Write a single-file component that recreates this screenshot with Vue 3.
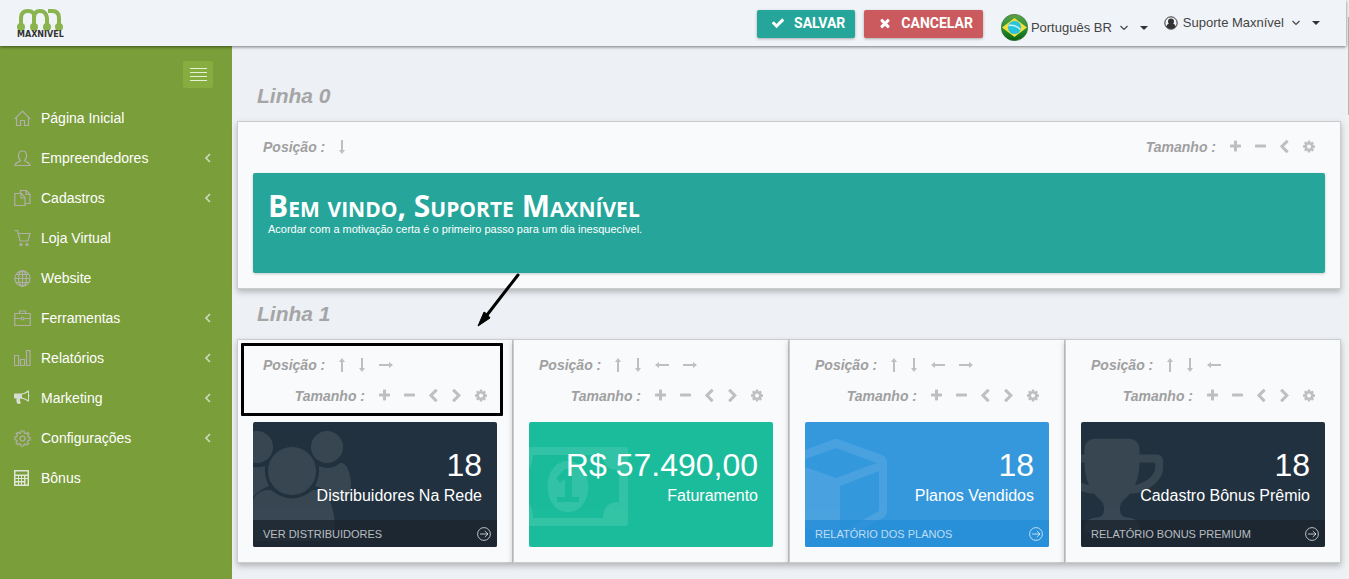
<script setup>
const menu = [
  { label: 'Página Inicial', icon: 'home' },
  { label: 'Empreendedores', icon: 'user', sub: true },
  { label: 'Cadastros', icon: 'docs', sub: true },
  { label: 'Loja Virtual', icon: 'cart' },
  { label: 'Website', icon: 'globe' },
  { label: 'Ferramentas', icon: 'case', sub: true },
  { label: 'Relatórios', icon: 'chart', sub: true },
  { label: 'Marketing', icon: 'horn', sub: true },
  { label: 'Configurações', icon: 'gear', sub: true },
  { label: 'Bônus', icon: 'calc' }
]

const arrows = {
  up: { w: 6, name: 'Mover para cima', d: 'M3 0L6 4H4V14H2V4H0Z' },
  down: { w: 6, name: 'Mover para baixo', d: 'M3 14L0 10H2V0H4V10H6Z' },
  left: { w: 14, name: 'Mover para a esquerda', d: 'M0 7L4 4V6H14V8H4V10Z' },
  right: { w: 14, name: 'Mover para a direita', d: 'M14 7L10 10V8H0V6H10V4Z' }
}

const tools = {
  plus: { w: 11, box: '192 128 1408 1536', name: 'Aumentar', d: 'M1600 736v192q0 40-28 68t-68 28h-416v416q0 40-28 68t-68 28h-192q-40 0-68-28t-28-68v-416h-416q-40 0-68-28t-28-68v-192q0-40 28-68t68-28h416v-416q0-40 28-68t68-28h192q40 0 68 28t28 68v416h416q40 0 68 28t28 68z' },
  minus: { w: 11, box: '192 128 1408 1536', name: 'Diminuir', d: 'M1600 736v192q0 40-28 68t-68 28h-1216q-40 0-68-28t-28-68v-192q0-40 28-68t68-28h1216q40 0 68 28t28 68z' },
  prev: { w: 9, box: '410 50 1100 1570', name: 'Recuar', d: 'M1427 301l-531 531 531 531q19 19 19 45t-19 45l-166 166q-19 19-45 19t-45-19l-742-742q-19-19-19-45t19-45l742-742q19-19 45-19t45 19l166 166q19 19 19 45t-19 45z' },
  next: { w: 9, box: '310 50 1100 1570', name: 'Avançar', d: 'M1363 877l-742 742q-19 19-45 19t-45-19l-166-166q-19-19-19-45t19-45l531-531-531-531q-19-19-19-45t19-45l166-166q19-19 45-19t45 19l742 742q19 19 19 45t-19 45z' },
  cog: { w: 12, box: '128 128 1536 1536', name: 'Configurar', d: 'M1152 896q0-106-75-181t-181-75-181 75-75 181 75 181 181 75 181-75 75-181zm512-109v222q0 12-8 23t-20 13l-185 28q-19 54-39 91 35 50 107 138 10 12 10 25t-9 23q-27 37-99 108t-94 71q-12 0-26-9l-138-108q-44 23-91 38-16 136-29 186-7 28-36 28h-222q-14 0-24.5-8.5t-11.5-21.5l-28-184q-49-16-90-37l-141 107q-10 9-25 9-14 0-25-11-126-114-165-168-7-10-7-23 0-12 8-23 15-21 51-66.5t54-70.5q-27-50-41-99l-183-27q-13-2-21-12.5t-8-23.5v-222q0-12 8-23t19-13l186-28q14-46 39-92-40-57-107-138-10-12-10-24 0-10 9-23 26-36 98.5-107.5t94.5-71.5q13 0 26 10l138 107q44-23 91-38 16-136 29-186 7-28 36-28h222q14 0 24.5 8.5t11.5 21.5l28 184q49 16 90 37l142-107q9-9 24-9 13 0 25 10 129 119 165 170 7 8 7 22 0 12-8 23-15 21-51 66.5t-54 70.5q26 50 41 98l183 28q13 2 21 12.5t8 23.5z' }
}

const rows = [
  { title: 'Linha 0', panels: [{ kind: 'banner', move: ['down'], size: ['plus', 'minus', 'prev', 'cog'] }] },
  {
    title: 'Linha 1',
    panels: [
      { kind: 'stat', art: 'users', tone: 'navy', value: '18', desc: 'Distribuidores Na Rede', more: 'Ver Distribuidores', move: ['up', 'down', 'right'], size: ['plus', 'minus', 'prev', 'next', 'cog'], marked: true },
      { kind: 'stat', art: 'money', tone: 'mint', value: 'R$ 57.490,00', desc: 'Faturamento', move: ['up', 'down', 'left', 'right'], size: ['plus', 'minus', 'prev', 'next', 'cog'] },
      { kind: 'stat', art: 'cube', tone: 'blue', value: '18', desc: 'Planos Vendidos', more: 'Relatório dos Planos', move: ['up', 'down', 'left', 'right'], size: ['plus', 'minus', 'prev', 'next', 'cog'] },
      { kind: 'stat', art: 'trophy', tone: 'navy', value: '18', desc: 'Cadastro Bônus Prêmio', more: 'Relatório Bonus Premium', move: ['up', 'down', 'left'], size: ['plus', 'minus', 'prev', 'next', 'cog'] }
    ]
  }
]
</script>

<template>
  <div class="frame">
    <div class="page">
      <header class="topbar">
        <a href="#" class="logo">
          <svg width="46" height="22" viewBox="0 0 46 22" aria-hidden="true">
            <g fill="none" stroke="#8ab44d" stroke-width="4">
              <path d="M4 18V9Q4 2 11 2T17 9V18M17 9Q17 2 23 2T30 9V18M31 2H35Q42 2 42 9V18" />
            </g>
            <g fill="#8ab44d"><circle cx="4" cy="18" r="4" /><circle cx="17" cy="18" r="4" /><circle cx="30" cy="18" r="4" /><circle cx="42" cy="18" r="4" /></g>
          </svg>
          <span>MAXNIVEL</span>
        </a>
        <div class="actions">
          <button class="btn save" type="button">
            <svg width="14" height="14" viewBox="0 0 1792 1792" fill="currentColor"><path d="M1671 566q0 40-28 68l-724 724-136 136q-28 28-68 28t-68-28l-136-136-362-362q-28-28-28-68t28-68l136-136q28-28 68-28t68 28l294 295 656-657q28-28 68-28t68 28l136 136q28 28 28 68z" /></svg>
            Salvar
          </button>
          <button class="btn cancel" type="button">
            <svg width="14" height="14" viewBox="0 0 1792 1792" fill="currentColor"><path d="M1490 1322q0 40-28 68l-136 136q-28 28-68 28t-68-28l-294-294-294 294q-28 28-68 28t-68-28l-136-136q-28-28-28-68t28-68l294-294-294-294q-28-28-28-68t28-68l136-136q28-28 68-28t68 28l294 294 294-294q28-28 68-28t68 28l136 136q28 28 28 68t-28 68l-294 294 294 294q28 28 28 68z" /></svg>
            Cancelar
          </button>
        </div>
        <button class="drop lang" type="button">
          <svg class="flag" width="27" height="27" viewBox="0 0 27 27">
            <defs>
              <linearGradient id="leaf" x1="0" y1="0" x2="0" y2="1"><stop offset="0" stop-color="#5f9f45" /><stop offset=".5" stop-color="#28943a" /><stop offset="1" stop-color="#08620d" /></linearGradient>
            </defs>
            <circle cx="13.5" cy="13.5" r="13.2" fill="url(#leaf)" stroke="#2c6330" stroke-width=".6" />
            <path d="M1 13.5L13.5 4 26 13.5 13.5 23Z" fill="#f4df38" />
            <circle cx="13.5" cy="13.5" r="6.6" fill="#28c4df" />
            <path d="M7.5 11.5Q14 10 19.500 15.500" fill="none" stroke="#c8f4f5" stroke-width="1.500" />
          </svg>
          <span>Português BR</span>
          <svg class="angle" width="8" height="6" viewBox="0 0 8 6"><path d="M.5 1L4 4.500 7.500 1" fill="none" stroke="#444" stroke-width="1.200" /></svg>
          <i class="caret"></i>
        </button>
        <button class="drop account" type="button">
          <svg width="14" height="14" viewBox="0 0 14 14"><circle cx="7" cy="7" r="6.200" fill="none" stroke="#333" /><circle cx="7" cy="5.500" r="3" fill="#333" /><path d="M2 10.500Q3.500 7.500 5.500 7.500H8.500Q10.500 7.500 12 10.500 10 13 7 13T2 10.500Z" fill="#333" /></svg>
          <span>Suporte Maxnível</span>
          <svg class="angle" width="8" height="6" viewBox="0 0 8 6"><path d="M.5 1L4 4.500 7.500 1" fill="none" stroke="#444" stroke-width="1.200" /></svg>
          <i class="caret"></i>
        </button>
      </header>

      <div class="body">
        <nav class="sidebar" aria-label="Menu">
          <button class="toggle" type="button" aria-label="Alternar menu"><i></i><i></i><i></i><i></i></button>
          <ul>
            <li v-for="item in menu" :key="item.label">
              <a href="#">
                <svg class="ico" width="17" height="17" viewBox="0 0 17 17" fill="none" stroke="#b0b0a8" stroke-width="1.200">
                  <path v-if="item.icon === 'home'" d="M.8 8.800L8.500 1 16.200 8.800M2.500 8V15.500H6.500V10.500H10.500V15.500H14.500V8" />
                  <path v-else-if="item.icon === 'user'" d="M6.500 10.500C3.500 8 3.500 1 8.500 1S13.500 8 10.500 10.500C11.500 12.500 16 12 16 15.500H1C1 12 5.500 12.500 6.500 10.500Z" />
                  <path v-else-if="item.icon === 'docs'" d="M6.500 4V.5H12.500L16 4.500V13.500H11M12 1V4.500H15.500M.8 3.500H7.500L11 7.500V15.500H.8ZM7 4V8H10.500" />
                  <g v-else-if="item.icon === 'cart'"><path d="M.5.5H3.500L6 11H14L16 3.500H4.500" /><circle cx="7" cy="14.500" r="1" fill="#b0b0a8" /><circle cx="13" cy="14.500" r="1" fill="#b0b0a8" /></g>
                  <g v-else-if="item.icon === 'globe'"><circle cx="8.500" cy="8.500" r="7.600" /><ellipse cx="8.500" cy="8.500" rx="4" ry="7.600" /><path d="M8.500 1V16M1 8.500H16M2.500 4.500H14.500M2.500 12.500H14.500" /></g>
                  <g v-else-if="item.icon === 'case'"><path d="M.8 3.500H16.200V15.500H.8ZM5.500 3.500V1H11.500V3.500M1 8.500H6.500M10.500 8.500H16" /><circle cx="8.500" cy="8.500" r="1.500" /></g>
                  <path v-else-if="item.icon === 'chart'" d="M.5 5.500H4.500V15.500H.5ZM6.500 9.500H10.500V15.500H6.500ZM12.500.5H16V15.500H12.500Z" />
                  <g v-else-if="item.icon === 'horn'" stroke="none" fill="#d5dcd0"><path fill-rule="evenodd" d="M0 4.500Q0 3.500 1 3.500H7Q11 3 14 .5H15V5Q16.500 5.500 15 7V11.500H14Q10 8.500 6 8.500 5.500 11 7 13 5 14.500 3 13.500 2 11 2.500 8.500H1Q0 8.500 0 7.500ZM8 4.500V7.500Q11 8 14 10V2.200Q11 4.200 8 4.500Z" /></g>
                  <g v-else-if="item.icon === 'gear'"><circle cx="8.500" cy="8.500" r="2.500" /><path d="M7 1H10L10.300 3 12 3.700 13.700 2.300 15 4 13.700 5.700 14.200 7 16 7.300V10L14.200 10.300 13.500 12 14.700 13.500 13 15 11.500 13.800 10.200 14.300 9.800 16H7L6.700 14.300 5.200 13.700 3.700 14.800 2 13 3.200 11.500 2.700 10.200 1 9.800V7L2.800 6.700 3.400 5.200 2.300 3.700 4 2.200 5.500 3.300 6.700 2.800Z" /></g>
                  <g v-else><path d="M0 0H15V16H0ZM1.500 1.500V4.500H13.500V1.500ZM1.500 6V8H4V6ZM5 6V8H7V6ZM8 6V8H10V6ZM11.500 6V8H13.500V6ZM1.500 9V11H4V9ZM5 9V11H7V9ZM8 9V11H10V9ZM1.500 12.500V14.500H4V12.500ZM5 12.500V14.500H7V12.500ZM8 12.500V14.500H10V12.500ZM11.500 9V14.500H13.500V9Z" fill="#dfe5d8" fill-rule="evenodd" stroke="none" /></g>
                </svg>
                <span>{{ item.label }}</span>
                <svg v-if="item.sub" class="more-arrow" width="8" height="10" viewBox="0 0 8 10"><path d="M6 1L2 5 6 9" fill="none" stroke="#d2dcc3" stroke-width="1.600" /></svg>
              </a>
            </li>
          </ul>
        </nav>

        <main class="content">
          <section v-for="(row, r) in rows" :key="row.title">
            <h2>{{ row.title }}</h2>
            <div class="panels">
              <article v-for="(p, i) in row.panels" :key="i" class="panel">
                <div class="controls" :class="{ inline: p.kind === 'banner' }">
                  <div class="line">
                    <span>Posição :</span>
                    <button v-for="m in p.move" :key="m" type="button" :aria-label="arrows[m].name">
                      <svg :width="arrows[m].w" height="14" :viewBox="`0 0 ${arrows[m].w} 14`"><path :d="arrows[m].d" /></svg>
                    </button>
                  </div>
                  <div class="line end">
                    <span>Tamanho :</span>
                    <button v-for="s in p.size" :key="s" type="button" :aria-label="tools[s].name">
                      <svg :width="tools[s].w" height="13" :viewBox="tools[s].box"><path :d="tools[s].d" /></svg>
                    </button>
                  </div>
                </div>

                <div v-if="p.kind === 'banner'" class="banner">
                  <h1>Bem vindo, Suporte Maxnível</h1>
                  <p>Acordar com a motivação certa é o primeiro passo para um dia inesquecível.</p>
                </div>

                <div v-else class="stat" :class="p.tone">
                  <svg class="art" width="140" height="125" viewBox="0 0 140 125" aria-hidden="true">
                    <g v-if="p.art === 'users'">
                      <circle cx="4" cy="25" r="16" /><circle cx="74" cy="25" r="16" /><circle cx="39" cy="49" r="24" />
                      <path d="M0 45Q6 46 12 44 11 55 16 64 7 67 0 75Z" />
                      <path d="M66 44Q78 49 87 41 96 40 98 62 98 74 90 77H80Q73 66 62 64 67 55 66 44Z" />
                      <path d="M0 78Q5 67 18 68 39 85 60 68 79 66 82 103 82 119 68 119H0Z" />
                    </g>
                    <g v-else-if="p.art === 'money'">
                      <path fill-rule="evenodd" d="M0 25H96Q99 25 99 28V101Q99 104 96 104H0ZM4 33Q3 43 0 47V82Q4 87 4 96H74Q74 80 90 80V48Q74 48 74 33Z" />
                      <path fill-rule="evenodd" d="M39 39C66 39 66 90 39 90S12 39 39 39ZM36 47L27 56 31 61 36 57V75H28V80H50V75H43V47Z" />
                    </g>
                    <path v-else-if="p.art === 'cube'" fill-rule="evenodd" d="M0 28L27 18Q31 16 35 18L77 33Q82 35 82 41V88Q82 93 78 96L36 118Q31 121 26 118L0 105ZM0 37V45L31 56 72 41 31 26ZM35 64V111L74 89V49Z" />
                    <svg v-else x="-24" y="9" width="110" height="110" viewBox="0 0 1792 1792">
                      <path d="M522 883q-74-162-74-371h-256v96q0 78 94.5 162t235.5 113zm1078-275v-96h-256q0 209-74 371 141-29 235.5-113t94.5-162zm128-128v128q0 71-41.5 143t-112 130-173 97.5-215.5 44.5q-42 54-95 95-38 34-52.5 72.5t-14.5 89.5q0 54 30.5 91t97.5 37q75 0 133.5 45.5t58.5 114.5v64q0 14-9 23t-23 9h-832q-14 0-23-9t-9-23v-64q0-69 58.5-114.5t133.5-45.5q67 0 97.5-37t30.5-91q0-51-14.5-89.5t-52.5-72.5q-53-41-95-95-113-5-215.5-44.5t-173-97.5-112-130-41.5-143v-128q0-40 28-68t68-28h288v-96q0-66 47-113t113-47h576q66 0 113 47t47 113v96h288q40 0 68 28t28 68z" />
                    </svg>
                  </svg>
                  <div class="details">
                    <strong>{{ p.value }}</strong>
                    <span>{{ p.desc }}</span>
                  </div>
                  <a v-if="p.more" href="#" class="more">
                    {{ p.more }}
                    <svg width="14" height="14" viewBox="0 0 14 14" fill="none" stroke="currentColor"><circle cx="7" cy="7" r="6.400" /><path d="M3 7H11M7.800 4L11 7 7.800 10" /></svg>
                  </a>
                </div>
                <div v-if="p.marked" class="mark"></div>
              </article>
            </div>
            <svg v-if="r === 1" class="pointer" width="46" height="56" viewBox="0 0 46 56" aria-hidden="true">
              <path d="M42 3L11 43" stroke="#000" stroke-width="3" stroke-linecap="round" /><path d="M2 54L8 40 11 42 14 46Z" stroke="#000" stroke-width="1" />
            </svg>
          </section>
        </main>
      </div>
    </div>
    <div class="rail" aria-hidden="true"><i></i></div>
  </div>
</template>

<style>
body { margin: 0; background: #edf0f5; }
</style>

<style scoped>
* { box-sizing: border-box; }
button { margin: 0; padding: 0; border: 0; background: none; font: inherit; color: inherit; cursor: pointer; }
a { color: inherit; text-decoration: none; }
svg { display: block; flex: none; }

.frame { display: flex; min-height: 100vh; font: 14px/20px "Liberation Sans", Arial, sans-serif; }
.page { flex: 1; min-width: 0; display: flex; flex-direction: column; }
.rail { width: 3px; padding: 17px 0 0 2px; background: #f1f1f1; }
.rail i { display: block; height: 98px; background: #b5b5b5; }

.topbar { position: relative; z-index: 2; display: flex; align-items: flex-start; height: 46px; padding-right: 26px; background: #f0f3f8; box-shadow: 0 1px 3px rgba(0, 0, 0, .5); color: #444; }
.logo { display: flex; flex-direction: column; margin: 9px auto 0 17px; font: bold 8px/8px "DejaVu Sans", sans-serif; color: #333; }
.actions { display: flex; gap: 9px; margin: 10px 18px 0 0; }
.btn { display: flex; align-items: center; gap: 9px; height: 28px; padding: 0 10px 2px 14px; border-radius: 2px; color: #fff; font: bold 14px/20px Roboto, sans-serif; text-transform: uppercase; box-shadow: 0 1px 3px rgba(0, 0, 0, .3); }
.save { background: #26a69a; }
.cancel { background: #cb5a5e; }
.drop { display: flex; align-items: center; font: 13px/20px "Liberation Sans", Arial, sans-serif; }
.lang { margin: 14px 16px 0 0; }
.lang span { margin-left: 3px; }
.account { margin-top: 13px; }
.account span { margin-left: 5px; }
.angle { margin: 0 12px 0 8px; }
.caret { border: 4px solid transparent; border-top-color: #333; border-bottom: 0; }

.body { flex: 1; display: flex; }
.sidebar { flex: none; width: 232px; padding-top: 15px; background: #7a9e3a; color: #fff; }
.toggle { display: flex; flex-direction: column; justify-content: center; gap: 3px; width: 30px; height: 27px; margin: 0 19px 10px auto; padding: 0 6px 0 7px; border-radius: 2px; background: #85ad3f; }
.toggle i { height: 1px; background: #e7f0d6; }
.sidebar ul { margin: 0; padding: 0; list-style: none; }
.sidebar a { display: flex; align-items: center; height: 40px; padding: 0 20px 0 14px; }
.ico { margin-right: 10px; }
.more-arrow { margin-left: auto; }

.content { flex: 1; min-width: 0; padding: 25px 5px 16px; }
section { position: relative; }
h2 { margin: 0; padding-left: 20px; font-size: 21px; line-height: 50px; font-style: italic; color: #a5a5a5; }
.panels { display: flex; }
.panel { position: relative; flex: 1 1 0; min-width: 0; padding: 9px 15px 15px; border: 1px solid #ccc; background: #f8fafc; box-shadow: 0 3px 6px rgba(0, 0, 0, .25); }
.controls { padding: 0 10px; margin-bottom: 11px; color: #a0a0a0; font-weight: bold; font-style: italic; }
.inline { display: flex; justify-content: space-between; }
.line { display: flex; align-items: center; gap: 14px; height: 31px; }
.line svg { fill: #bfbfbf; }
.end { justify-content: flex-end; }

.banner { height: 100px; padding: 15px; border-radius: 2px; background: #26a69a; color: #fff; box-shadow: 0 1px 3px rgba(0, 0, 0, .2); }
h1 { margin: 0; font: bold 30px/35px "Open Sans", sans-serif; font-variant: small-caps; }
.banner p { margin: 0; font-size: 11px; line-height: 12px; }

.stat { position: relative; display: flex; flex-direction: column; height: 125px; border-radius: 2px; overflow: hidden; color: #fff; }
.navy { background: #22313f; }
.mint { background: #1bbc9b; }
.blue { background: #3598dc; }
.art { position: absolute; top: 0; left: 0; fill: #fff; opacity: .1; }
.details { position: relative; display: flex; flex-direction: column; align-items: flex-end; padding: 25px 15px 0; }
.details strong { font-size: 32px; line-height: 36px; font-weight: normal; }
.details span { font-size: 16px; line-height: 25px; }
.more { position: relative; display: flex; align-items: center; justify-content: space-between; height: 27px; margin-top: auto; padding: 0 6px 0 10px; background: #1c262fcc; color: rgba(255, 255, 255, .7); font-size: 11px; text-transform: uppercase; }
.blue .more { background: #258fd7cc; }

.mark { position: absolute; z-index: 1; top: 3px; left: 3px; right: 9px; height: 73px; border: 3px solid #000; border-radius: 1px; pointer-events: none; }
.pointer { position: absolute; z-index: 1; top: -17px; left: 239px; }
</style>
